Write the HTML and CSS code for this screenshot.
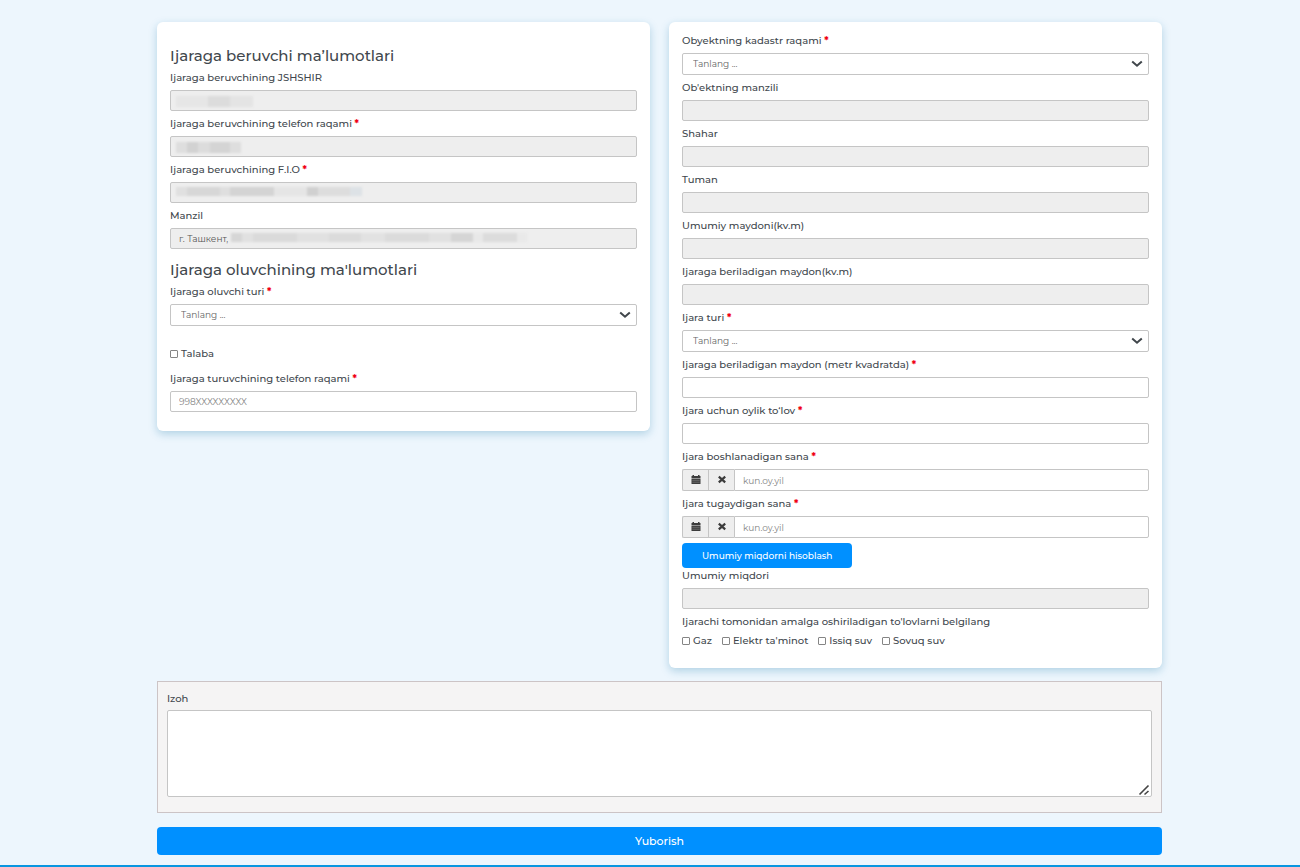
FILE: index.html
```html
<!DOCTYPE html>
<html lang="uz">
<head>
<meta charset="utf-8">
<meta name="viewport" content="width=device-width, initial-scale=1">
<title>Ijara shartnomasi</title>
<link rel="stylesheet" href="styles.css">
</head>
<body>
<svg class="sprite" aria-hidden="true">
  <symbol id="chevron" viewBox="0 0 12 8"><path d="M1.200 1.400 6 5.700l4.800-4.300" fill="none" stroke="#40464b" stroke-width="2"/></symbol>
  <symbol id="calendar" viewBox="0 0 10 10"><path d="M1.500 0H3v1h4V0h1.500v1h1v2h-9V1h1zM.5 3.600h9V9h-9z" fill="#3c3c3c"/><path d="M1.300 5.300h7.400M1.300 7.200h7.400" stroke="#888" stroke-width=".6" fill="none"/></symbol>
  <symbol id="cross" viewBox="0 0 10 10"><path d="m1.800 1.600 6.400 5.800m0-5.800L1.800 7.400" fill="none" stroke="#3c3c3c" stroke-width="2.200"/></symbol>
</svg>
<form class="page">
  <div class="columns">
    <section class="card card-owner">
      <h2 class="title">Ijaraga beruvchi ma’lumotlari</h2>
      <div class="field">
        <label for="pin">Ijaraga beruvchining JSHSHIR</label>
        <div class="wrap"><input class="control" id="pin" disabled><span class="mask mask-pin"></span></div>
      </div>
      <div class="field">
        <label for="phone">Ijaraga beruvchining telefon raqami <b>*</b></label>
        <div class="wrap"><input class="control" id="phone" disabled><span class="mask mask-phone"></span></div>
      </div>
      <div class="field">
        <label for="name">Ijaraga beruvchining F.I.O <b>*</b></label>
        <div class="wrap"><input class="control" id="name" disabled><span class="mask mask-name"></span></div>
      </div>
      <div class="field">
        <label for="address">Manzil</label>
        <div class="wrap"><input class="control" id="address" value="г. Ташкент," disabled><span class="mask mask-address"></span></div>
      </div>
      <h2 class="title title-next">Ijaraga oluvchining ma'lumotlari</h2>
      <div class="field">
        <label for="type">Ijaraga oluvchi turi <b>*</b></label>
        <div class="wrap"><select class="control select" id="type"><option>Tanlang ...</option></select><svg class="chevron"><use href="#chevron"/></svg></div>
      </div>
      <label class="check student"><input type="checkbox">Talaba</label>
      <div class="field">
        <label for="tenant">Ijaraga turuvchining telefon raqami <b>*</b></label>
        <input class="control" id="tenant" placeholder="998XXXXXXXXX">
      </div>
    </section>
    <section class="card card-object">
      <div class="field">
        <label for="cadastre">Obyektning kadastr raqami <b>*</b></label>
        <div class="wrap"><select class="control select" id="cadastre"><option>Tanlang ...</option></select><svg class="chevron"><use href="#chevron"/></svg></div>
      </div>
      <div class="field"><label for="place">Ob'ektning manzili</label><input class="control" id="place" disabled></div>
      <div class="field"><label for="city">Shahar</label><input class="control" id="city" disabled></div>
      <div class="field"><label for="district">Tuman</label><input class="control" id="district" disabled></div>
      <div class="field"><label for="area">Umumiy maydoni(kv.m)</label><input class="control" id="area" disabled></div>
      <div class="field"><label for="rentarea">Ijaraga beriladigan maydon(kv.m)</label><input class="control" id="rentarea" disabled></div>
      <div class="field">
        <label for="kind">Ijara turi <b>*</b></label>
        <div class="wrap"><select class="control select" id="kind"><option>Tanlang ...</option></select><svg class="chevron"><use href="#chevron"/></svg></div>
      </div>
      <div class="field"><label for="metres">Ijaraga beriladigan maydon (metr kvadratda) <b>*</b></label><input class="control" id="metres"></div>
      <div class="field"><label for="fee">Ijara uchun oylik to‘lov <b>*</b></label><input class="control" id="fee"></div>
      <div class="field">
        <label for="start">Ijara boshlanadigan sana <b>*</b></label>
        <div class="date">
          <button type="button" class="addon" aria-label="Kalendar"><svg><use href="#calendar"/></svg></button>
          <button type="button" class="addon" aria-label="Tozalash"><svg><use href="#cross"/></svg></button>
          <input class="control" id="start" placeholder="kun.oy.yil">
        </div>
      </div>
      <div class="field">
        <label for="end">Ijara tugaydigan sana <b>*</b></label>
        <div class="date">
          <button type="button" class="addon" aria-label="Kalendar"><svg><use href="#calendar"/></svg></button>
          <button type="button" class="addon" aria-label="Tozalash"><svg><use href="#cross"/></svg></button>
          <input class="control" id="end" placeholder="kun.oy.yil">
        </div>
      </div>
      <button type="button" class="calculate">Umumiy miqdorni hisoblash</button>
      <div class="field"><label for="total">Umumiy miqdori</label><input class="control" id="total" disabled></div>
      <fieldset class="payments">
        <legend>Ijarachi tomonidan amalga oshiriladigan to'lovlarni belgilang</legend>
        <div class="checks">
          <label class="check"><input type="checkbox">Gaz</label>
          <label class="check"><input type="checkbox">Elektr ta'minot</label>
          <label class="check"><input type="checkbox">Issiq suv</label>
          <label class="check"><input type="checkbox">Sovuq suv</label>
        </div>
      </fieldset>
    </section>
  </div>
  <section class="note">
    <label for="note">Izoh</label>
    <div class="wrap">
      <textarea class="control" id="note"></textarea>
      <svg class="grip" viewBox="0 0 12 12"><path d="M1.500 10.500 10.500 1.500M6.500 10.500l4-3.500" fill="none" stroke="#444" stroke-width="1.600"/></svg>
    </div>
  </section>
  <button type="submit" class="submit">Yuborish</button>
</form>
</body>
</html>
```
FILE: styles.css
```css
* { box-sizing: border-box; }
body {
  margin: 0;
  min-height: 100vh;
  background: #edf6fd;
  border-bottom: 2px solid #0996e0;
  color: #41474d;
  font: 500 10px/16px Montserrat, Inter, "Noto Sans", sans-serif;
}
.sprite { display: none; }
.page { padding: 22px 138px 10px 157px; }
.columns {
  display: grid;
  grid-template-columns: 1fr 1fr;
  align-items: start;
  gap: 19px;
}
.card {
  background: #fff;
  border-radius: 6px;
  box-shadow: 0 3px 8px rgba(20, 120, 165, 0.28);
}
.card-owner { padding: 22px 13px 14px; }
.card-object { padding: 11px 13px 19px; }
.title {
  margin: 0 0 2px;
  font-size: 15px;
  font-weight: 500;
  line-height: 24px;
}
.title-next { margin-top: 9px; }
.field { margin-bottom: 5px; }
.field label, .note label { display: block; margin-bottom: 4px; }
label b { color: #f00012; font-weight: 700; }
.wrap { position: relative; }
.control {
  display: block;
  width: 100%;
  height: 21px;
  margin: 0;
  padding: 0 8px;
  background: #fff;
  border: 1px solid #c5c5c5;
  border-radius: 2px;
  color: #666;
  font: 400 9px/16px Montserrat, Inter, "Noto Sans", sans-serif;
}
.control:disabled { background: #eee; color: #555; opacity: 1; }
.control::placeholder { color: #858585; opacity: 1; }
.select { height: 22px; appearance: none; padding: 0 10px; }
.chevron {
  position: absolute;
  right: 6px;
  top: 7px;
  width: 12px;
  height: 8px;
  pointer-events: none;
}
.mask {
  position: absolute;
  left: 6px;
  top: 6px;
  height: 11px;
  filter: blur(1px);
}
.mask-pin {
  width: 77px;
  background: linear-gradient(90deg, #e6e6e6 0 32px, #dcdcdc 32px 54px, #e4e4e4 54px);
}
.mask-phone {
  width: 65px;
  background: linear-gradient(90deg, #dedede 0 11px, #d2d2d2 11px 22px, #dcdcdc 22px 34px, #d4d4d4 34px 54px, #dedede 54px);
}
.mask-name {
  top: 5px;
  width: 186px;
  height: 9px;
  background: linear-gradient(90deg, #e0e0e0 0 11px, #d7d7d7 11px 44px, #dfdfdf 44px 54px, #d4d4d4 54px 98px, #e5e5e5 98px 131px, #d0d0d0 131px 142px, #dddddd 142px 174px, #dde2e6 174px);
}
.mask-address {
  left: 61px;
  top: 5px;
  width: 296px;
  height: 9px;
  background: linear-gradient(90deg, #d6d6d6 0 11px, #e1e1e1 11px 22px, #dadada 22px 66px, #e1e1e1 66px 98px, #dbdbdb 98px 130px, #e2e2e2 130px 154px, #dbdbdb 154px 198px, #e1e1e1 198px 220px, #d5d5d5 220px 242px, #e8e8e8 242px 252px, #dcdcdc 252px 286px, #e9e9e9 286px);
}
.check { display: flex; align-items: center; gap: 3px; }
.check input {
  appearance: none;
  width: 8px;
  height: 8px;
  margin: 0;
  background: #fff;
  border: 1px solid #858585;
  border-radius: 1px;
}
.check input:checked { background: #0090ff; }
.student { margin: 20px 0 9px; }
.date { display: flex; }
.date .control { height: 22px; border-radius: 0 2px 2px 0; }
.addon {
  display: flex;
  flex: none;
  align-items: center;
  justify-content: center;
  width: 26px;
  height: 22px;
  padding: 0;
  background: #eee;
  border: 1px solid #c5c5c5;
  border-right: 0;
}
.addon:first-child { border-radius: 2px 0 0 2px; }
.addon svg { width: 10px; height: 10px; }
.calculate {
  display: block;
  height: 25px;
  padding: 0 20px;
  background: #0090ff;
  border: 0;
  border-radius: 4px;
  color: #fff;
  font: 500 9px/16px Montserrat, Inter, "Noto Sans", sans-serif;
}
.payments { margin: 0; padding: 0; border: 0; }
.payments legend { margin-bottom: 3px; padding: 0; }
.checks { display: flex; flex-wrap: wrap; gap: 10px; }
.note {
  margin: 13px 0 14px;
  padding: 9px 9px 15px;
  background: #f5f4f4;
  border: 1px solid #ccc4c6;
}
.note .control { height: 87px; resize: none; }
.note label { margin-bottom: 3px; }
.grip { position: absolute; right: 2px; bottom: 1px; width: 12px; height: 12px; pointer-events: none; }
.submit {
  display: block;
  width: 100%;
  height: 28px;
  background: #0090ff;
  border: 0;
  border-radius: 4px;
  color: #fff;
  font: 500 11px/16px Montserrat, Inter, "Noto Sans", sans-serif;
}
```
